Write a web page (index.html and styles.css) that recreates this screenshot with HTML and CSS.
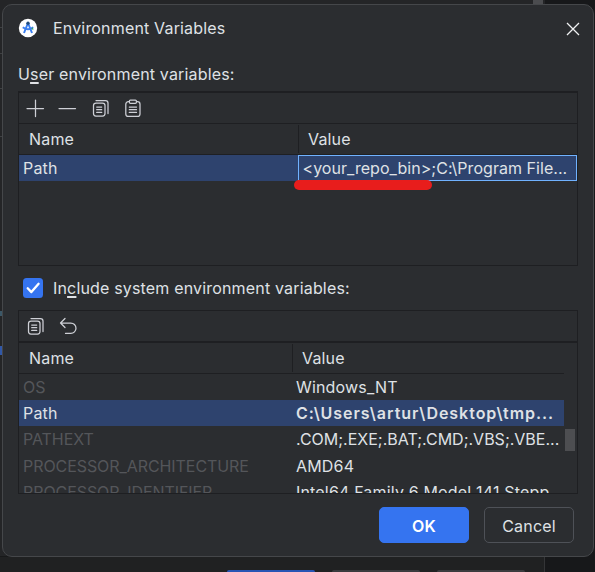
FILE: index.html
```html
<!DOCTYPE html>
<html lang="en">
<head>
<meta charset="utf-8">
<title>Environment Variables</title>
<link rel="stylesheet" href="styles.css">
</head>
<body>
<div class="backdrop">
  <i class="b-side"></i><i class="b-scroll"></i><i class="b-bottom"></i>
  <i class="b-ok"></i><i class="b-btn b-one"></i><i class="b-btn b-two"></i>
  <i class="b-line l1"></i><i class="b-line l2"></i><i class="b-line l3"></i><i class="b-line l4"></i>
  <i class="b-text t1"></i><i class="b-text t2"></i>
</div>
<main class="dialog">
  <header class="titlebar">
    <svg class="logo" width="20" height="20" viewBox="0 0 20 20"><circle cx="10" cy="10" r="9.2" fill="#fff"/><path d="M10 5 6 15M10 5l4 10" fill="none" stroke="#3b7ff0" stroke-width="2"/><path d="M4.8 9.2q5.2 4.2 10.4 0" fill="none" stroke="#3b7ff0" stroke-width="1.9"/><path d="m13.3 10.7 1.6-1.4 .5 3z" fill="#3ba765"/><circle cx="10" cy="5.3" r="1.7" fill="#214d80"/></svg>
    <span class="title">Environment Variables</span>
    <svg class="close" width="14" height="14" viewBox="0 0 14 14"><path d="m1 1 12 12M13 1 1 13" stroke="#f0f1f2" stroke-width="1.25"/></svg>
  </header>
  <div class="label user-label">U<span class="key">s</span>er environment variables:</div>
  <section class="panel user">
    <div class="toolbar">
      <svg width="20" height="20" viewBox="0 0 20 20"><path d="M2 10.5h16.5M10.5 2v16.5"/></svg>
      <svg width="20" height="20" viewBox="0 0 20 20"><path d="M2 10.5h16.5"/></svg>
      <svg class="shift" width="20" height="20" viewBox="0 0 20 20"><rect x="2.5" y="5" width="11.5" height="13" rx="2.5"/><path d="M5 2.5h9.5a2.5 2.5 0 0 1 2.5 2.5v10.5M5.7 9h5M5.7 11.7h5M5.7 14.4h5"/></svg>
      <svg width="20" height="20" viewBox="0 0 20 20"><rect x="2.8" y="3.7" width="14.2" height="14.7" rx="2.5"/><rect x="6.4" y="2" width="7" height="3.3" rx="1" class="clip"/><path d="M6.3 9h7.2M6.3 11.7h7.2M6.3 14.4h7.2"/></svg>
    </div>
    <div class="row head"><span>Name</span><span class="second">Value</span></div>
    <div class="row selected"><span>Path</span><span class="second editing"><span>&lt;your_repo_bin&gt;;C:\Program File...</span><i class="marker"></i></span></div>
  </section>
  <div class="label include"><svg width="20" height="20" viewBox="0 0 20 20"><rect width="20" height="20" rx="3.5" fill="#3574f0"/><path d="m4.7 10.3 3.7 3.8 7.2-8.3" fill="none" stroke="#fff" stroke-width="2.3" stroke-linecap="round" stroke-linejoin="round"/></svg><span>In<span class="key">c</span>lude system environment variables:</span></div>
  <section class="panel system">
    <div class="toolbar">
      <svg width="20" height="20" viewBox="0 0 20 20"><rect x="2.5" y="5" width="11.5" height="13" rx="2.5"/><path d="M5 2.5h9.5a2.5 2.5 0 0 1 2.5 2.5v10.5M5.7 9h5M5.7 11.7h5M5.7 14.4h5"/></svg>
      <svg width="20" height="20" viewBox="0 0 20 20"><path d="M7 2.5 2.5 7 7 11.5M2.5 7h10.3a5.2 5.2 0 0 1 0 10.4H7.5"/></svg>
    </div>
    <div class="row head"><span>Name</span><span class="second">Value</span></div>
    <div class="row"><span class="dim">OS</span><span class="second">Windows_NT</span></div>
    <div class="row selected"><span>Path</span><span class="second bold">C:\Users\artur\Desktop\tmp...</span></div>
    <div class="row"><span class="dim">PATHEXT</span><span class="second ext">.COM;.EXE;.BAT;.CMD;.VBS;.VBE...</span></div>
    <div class="row tall"><span class="dim">PROCESSOR_ARCHITECTURE</span><span class="second">AMD64</span></div>
    <div class="row"><span class="dim">PROCESSOR_IDENTIFIER</span><span class="second">Intel64 Family 6 Model 141 Stepp...</span></div>
    <i class="thumb"></i>
  </section>
  <footer class="actions"><button class="ok">OK</button><button>Cancel</button></footer>
</main>
</body>
</html>
```
FILE: styles.css
```css
* { box-sizing: border-box; }
body {
  margin: 0;
  width: 595px;
  height: 572px;
  overflow: hidden;
  position: relative;
  padding: 4px 0 0 2px;
  background: #242527;
  color: #dfe1e5;
  font: 16px/26px Inter, "Open Sans", sans-serif;
  letter-spacing: 0.17px;
}
.backdrop i { position: absolute; }
.b-side { left: 545px; top: 0; width: 50px; height: 572px; background: #17181a; }
.b-scroll { left: 533px; top: 0; width: 10px; height: 5px; background: #4b4c4f; }
.b-bottom { left: 0; top: 556px; width: 545px; height: 16px; background: #202122; border-top: 1px solid #18191a; border-right: 1px solid #343537; }
.b-ok { left: 227px; top: 570px; width: 88px; height: 2px; background: #2854b4; border-radius: 3px 3px 0 0; }
.b-btn { top: 570px; width: 88px; height: 2px; background: #3a3b3e; border-radius: 3px 3px 0 0; }
.b-one { left: 332px; }
.b-two { left: 437px; }
.b-line { left: 0; width: 2px; height: 1px; background: #3f4143; }
.l1 { top: 27px; } .l2 { top: 53px; } .l3 { top: 88px; } .l4 { top: 136px; }
.b-text { left: 0; width: 2px; }
.t1 { top: 311px; height: 5px; background: #3c5868; }
.t2 { top: 346px; height: 9px; background: #3158a8; }

.dialog {
  position: relative;
  width: 592px;
  height: 553px;
  padding: 0 16px 0 15px;
  background: #2b2d30;
  border: 1px solid #45474a;
  border-radius: 10px;
}
.titlebar { display: flex; align-items: center; height: 46px; }
.title { margin-left: 15px; }
.close { margin: 2px -3px 0 auto; }
.label { display: flex; align-items: center; white-space: pre; height: 26px; }
.user-label { margin-top: 10px; }
.key { text-decoration: underline; text-decoration-thickness: 1.5px; text-underline-offset: 2px; text-decoration-skip-ink: none; }
.panel { position: relative; overflow: hidden; width: 560px; border: 1px solid #1e1f22; }
.user { height: 175px; margin-top: 4px; border-top-width: 2px; }
.system { height: 184px; margin-top: 9px; }
.toolbar { display: flex; align-items: center; gap: 12px; padding: 0 0 1px 6px; height: 31px; border-bottom: 1px solid #1e1f22; }
.system .toolbar { height: 32px; border-bottom-width: 2px; padding: 0 0 0 7px; }
.toolbar svg { fill: none; stroke: #ced0d6; stroke-width: 1.25; stroke-linecap: round; stroke-linejoin: round; }
.toolbar .clip { fill: #2b2d30; }
.toolbar .shift { margin-left: 2px; }
.row { display: grid; grid-template-columns: 279px 1fr; height: 26px; white-space: pre; }
.row > span { padding-left: 4px; }
.row.head { height: 31px; line-height: 30px; border-bottom: 1px solid #1e1f22; }
.row.head > span { padding-left: 10px; }
.row.head .second { border-left: 1px solid #1e1f22; height: 28px; margin-top: 1px; line-height: 28px; padding-left: 9px; }
.system .row { grid-template-columns: 273px 1fr; width: 545px; }
.system .row.tall { height: 27px; line-height: 28px; }
.system .row .second { padding-left: 4px; }
.system .row.head .second { padding-left: 9px; }
.selected { background: #2e436e; }
.row > .editing { position: relative; border: 1px solid #70b2ff; line-height: 24px; width: 279px; padding-left: 3.5px; letter-spacing: 0.04px; }
.marker { position: absolute; left: -5px; top: 24px; width: 138px; height: 10px; border-radius: 5px; background: #e81d1c; }
.dim { color: #54565a; letter-spacing: -0.07px; }
.bold { font-weight: 600; letter-spacing: 0.97px; }
.ext { letter-spacing: 0; }
.thumb { position: absolute; left: 546px; top: 118px; width: 10px; height: 22px; background: #4d4e51; }
.include { margin-top: 9px; padding-left: 5px; }
.include > span { margin-left: 10px; }
.actions { display: flex; justify-content: flex-end; gap: 15px; margin: 13px 3px 0 0; }
button {
  width: 90px;
  height: 36px;
  padding: 1px 0 0;
  border: 1px solid #4e5157;
  border-radius: 5px;
  background: transparent;
  color: #dfe1e5;
  font: inherit;
  letter-spacing: inherit;
}
.ok { background: #3574f0; border-color: #3574f0; color: #fff; font-weight: 600; }
```
